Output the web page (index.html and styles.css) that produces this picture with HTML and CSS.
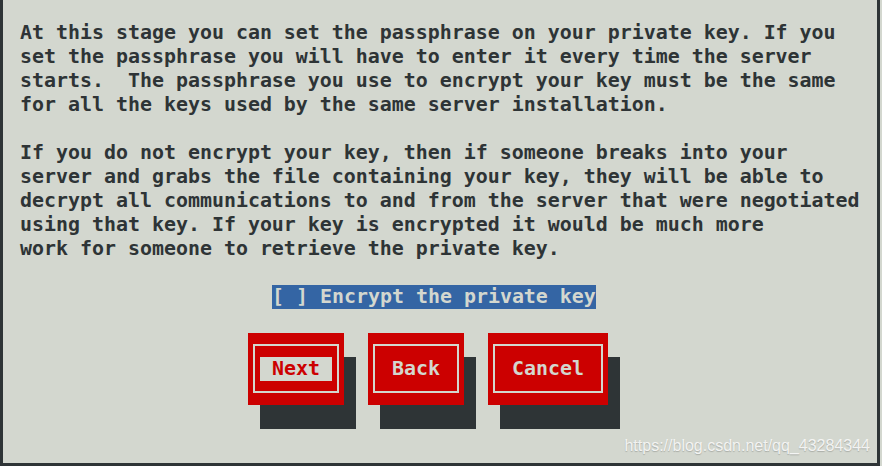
FILE: index.html
```html
<!DOCTYPE html>
<html lang="en">
<head>
  <meta charset="UTF-8" />
  <title>Set Private Key Passphrase</title>
  <link rel="stylesheet" href="styles.css">
</head>
<body>

<div class="dialog">
  <pre class="message">At this stage you can set the passphrase on your private key. If you
set the passphrase you will have to enter it every time the server
starts.  The passphrase you use to encrypt your key must be the same
for all the keys used by the same server installation.

If you do not encrypt your key, then if someone breaks into your
server and grabs the file containing your key, they will be able to
decrypt all communications to and from the server that were negotiated
using that key. If your key is encrypted it would be much more
work for someone to retrieve the private key.</pre>

  <div class="checkbox-row">
    <span class="checkbox focused">[ ] Encrypt the private key</span>
  </div>

  <div class="buttons">
    <div class="btn btn-short">
      <div class="btn-frame"><span class="btn-label active">Next</span></div>
    </div>
    <div class="btn btn-short">
      <div class="btn-frame"><span class="btn-label">Back</span></div>
    </div>
    <div class="btn btn-long">
      <div class="btn-frame"><span class="btn-label">Cancel</span></div>
    </div>
  </div>

  <!-- blog watermark -->
  <div class="watermark">https://blog.csdn.net/qq_43284344</div>
</div>

</body>
</html>
```

FILE: styles.css
```css
body {
  margin: 0;
  padding: 0;
  background: #d3d7cf;
  overflow: hidden;
}

.dialog {
  position: relative;
  box-sizing: border-box;
  width: 880px;
  height: 466px;
  padding: 21px 0 0 17px;
  border-left: 3px solid #2e3436;
  border-right: 3px solid #2e3436;
  border-bottom: 3px solid #2e3436;
  font-family: "DejaVu Sans Mono", "Liberation Mono", monospace;
  font-size: 19.93px;
  font-weight: bold;
  line-height: 24px;
  color: #2e3436;
}

.message {
  margin: 0;
  font: inherit;
  white-space: pre;
}

.checkbox-row {
  margin-top: 24px;
  padding-left: 252px;
  height: 24px;
}

.checkbox.focused {
  display: inline-block;
  background: #3465a4;
  color: #d3d7cf;
}

/* Buttons */
.buttons {
  display: flex;
  gap: 24px;
  margin-top: 24px;
  padding-left: 228px;
}

.btn {
  box-sizing: border-box;
  height: 72px;
  padding: 11px 5px 12px;
  background: #cc0000;
  box-shadow: 12px 24px 0 #2e3436;
}

.btn-short {
  width: 96px;
}

.btn-long {
  width: 120px;
}

.btn-frame {
  box-sizing: border-box;
  height: 100%;
  border: 2px solid #d3d7cf;
  display: flex;
  align-items: center;
  justify-content: center;
}

.btn-label {
  padding: 0 12px;
  color: #d3d7cf;
  line-height: 24px;
}

.btn-label.active {
  background: #d3d7cf;
  color: #cc0000;
}

.watermark {
  position: absolute;
  right: 7px;
  top: 437px;
  font-family: "Liberation Sans", Arial, sans-serif;
  font-size: 16px;
  font-weight: normal;
  line-height: 18px;
  color: rgba(250, 250, 250, 0.9);
  text-shadow: 0 1px 1px rgba(0, 0, 0, 0.2);
}
```
